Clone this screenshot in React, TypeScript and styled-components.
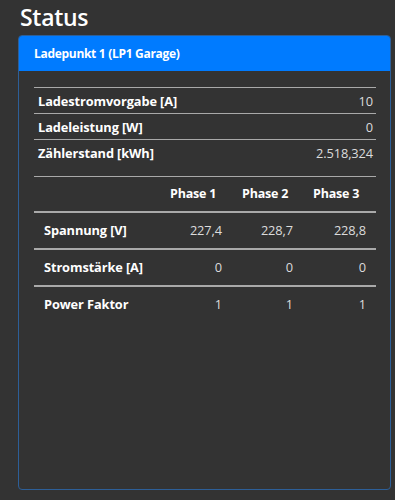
import React from "react";
import styled, { createGlobalStyle } from "styled-components";

const Global = createGlobalStyle`
  html, body { margin: 0; padding: 0; background: #333333; }
  body { font-family: "Open Sans", "Noto Sans", sans-serif; color: #fff; }
`;

const Page = styled.div`
  padding: 0 4px 10px 18px;
`;

const Title = styled.h1`
  margin: 0 0 0 2px;
  height: 35px;
  font-size: 23px;
  line-height: 34px;
  font-weight: 600;
  color: #ffffff;
  letter-spacing: -0.3px;
`;

const Card = styled.section`
  width: 373px;
  height: 455px;
  box-sizing: border-box;
  border: 1px solid #2d5f98;
  border-radius: 4px;
  background: #333333;
  overflow: hidden;
  display: flex;
  flex-direction: column;
`;

const CardHeader = styled.header`
  height: 35px;
  background: #007bff;
  padding: 0 15px;
  display: flex;
  align-items: center;
  font-size: 12px;
  font-weight: 700;
  color: #fff;
  letter-spacing: -0.3px;
`;

const CardBody = styled.div`
  padding: 16px 14px 15px 15px;
`;

const Table = styled.table<{ $gap: number }>`
  width: 100%;
  border-collapse: collapse;
  margin-bottom: ${(p) => p.$gap}px;
`;

const InfoRow = styled.tr`
  border-top: 1px solid #a9a9a9;
`;

const InfoCell = styled.td<{ $right?: boolean }>`
  height: 25px;
  padding: 0 3px 0 4px;
  font-size: 12.8px;
  letter-spacing: -0.1px;
  white-space: nowrap;
  text-align: ${(p) => (p.$right ? "right" : "left")};
  font-weight: ${(p) => (p.$right ? 400 : 700)};
  color: ${(p) => (p.$right ? "#dcdcdc" : "#ffffff")};
  vertical-align: middle;
`;

const HeadRow = styled.tr`
  border-top: 1px solid #a9a9a9;
  border-bottom: 2px solid #a9a9a9;
`;

const HeadCell = styled.th<{ $w?: number }>`
  box-sizing: border-box;
  height: 35px;
  padding: 0 10px;
  text-align: left;
  white-space: nowrap;
  font-size: 12.5px;
  letter-spacing: -0.2px;
  font-weight: 700;
  color: #fff;
  width: ${(p) => (p.$w ? `${p.$w}px` : "auto")};
`;

const PhaseRow = styled.tr<{ $line: boolean }>`
  border-top: ${(p) => (p.$line ? "2px solid #a9a9a9" : "none")};
`;

const PhaseCell = styled.td<{ $right?: boolean }>`
  height: 35px;
  padding: 0 10px;
  white-space: nowrap;
  font-size: 12.8px;
  letter-spacing: -0.1px;
  text-align: ${(p) => (p.$right ? "right" : "left")};
  font-weight: ${(p) => (p.$right ? 400 : 700)};
  color: ${(p) => (p.$right ? "#dcdcdc" : "#ffffff")};
`;

const info: [string, string][] = [
  ["Ladestromvorgabe [A]", "10"],
  ["Ladeleistung [W]", "0"],
  ["Zählerstand [kWh]", "2.518,324"],
];

const phases: [string, string[]][] = [
  ["Spannung [V]", ["227,4", "228,7", "228,8"]],
  ["Stromstärke [A]", ["0", "0", "0"]],
  ["Power Faktor", ["1", "1", "1"]],
];

export default function App() {
  return (
    <>
      <Global />
      <Page>
        <Title>Status</Title>
        <Card>
          <CardHeader>Ladepunkt 1 (LP1 Garage)</CardHeader>
          <CardBody>
            <Table $gap={11}>
              <tbody>
                {info.map(([k, v]) => (
                  <InfoRow key={k}>
                    <InfoCell>{k}</InfoCell>
                    <InfoCell $right>{v}</InfoCell>
                  </InfoRow>
                ))}
              </tbody>
            </Table>
            <Table $gap={0}>
              <thead>
                <HeadRow>
                  <HeadCell />
                  <HeadCell $w={72}>Phase 1</HeadCell>
                  <HeadCell $w={71}>Phase 2</HeadCell>
                  <HeadCell $w={73}>Phase 3</HeadCell>
                </HeadRow>
              </thead>
              <tbody>
                {phases.map(([k, vals], i) => (
                  <PhaseRow key={k} $line={i > 0}>
                    <PhaseCell>{k}</PhaseCell>
                    {vals.map((v, j) => (
                      <PhaseCell key={j} $right>
                        {v}
                      </PhaseCell>
                    ))}
                  </PhaseRow>
                ))}
              </tbody>
            </Table>
          </CardBody>
        </Card>
      </Page>
    </>
  );
}
